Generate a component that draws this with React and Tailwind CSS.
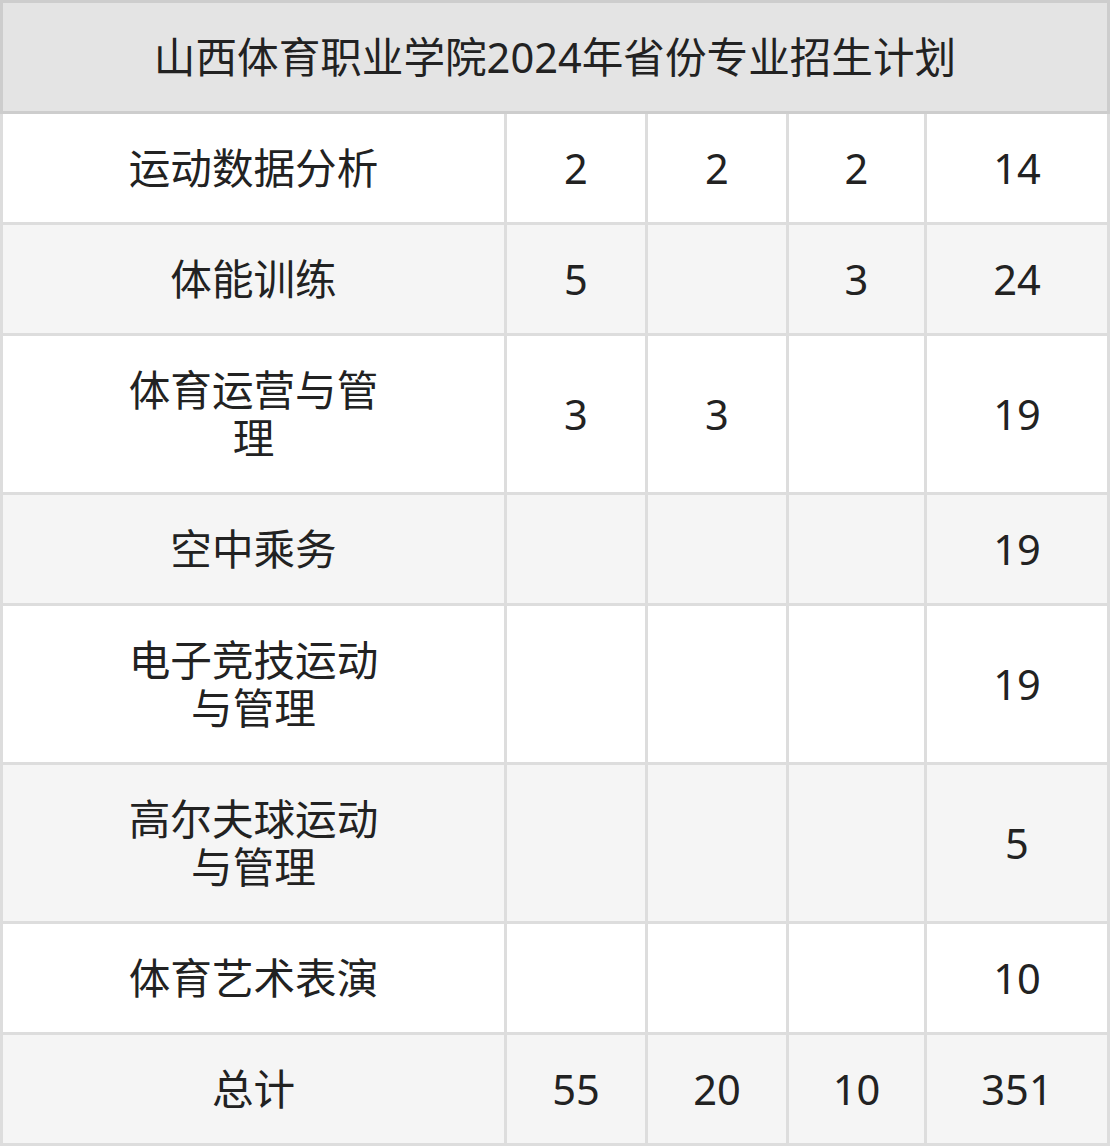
// 山西体育职业学院 2024 年省份专业招生计划表

const rows = [
  { name: '运动数据分析', a: '2', b: '2', c: '2', total: '14' },
  { name: '体能训练', a: '5', b: '', c: '3', total: '24' },
  { name: '体育运营与管理', a: '3', b: '3', c: '', total: '19' },
  { name: '空中乘务', a: '', b: '', c: '', total: '19' },
  { name: '电子竞技运动与管理', a: '', b: '', c: '', total: '19' },
  { name: '高尔夫球运动与管理', a: '', b: '', c: '', total: '5' },
  { name: '体育艺术表演', a: '', b: '', c: '', total: '10' },
  { name: '总计', a: '55', b: '20', c: '10', total: '351' },
]

const cell =
  'flex items-center justify-center text-center py-[30px] border-r-[3px] border-b-[3px] border-[#dddddd]'

export default function App() {
  return (
    <div
      className="w-[1110px] bg-white text-[#222222] text-[41.6px] leading-[48px]"
      style={{ fontFamily: '"Noto Sans", "Noto Sans CJK SC", sans-serif' }}
    >
      <div className="grid grid-cols-[507px_141px_141px_138px_183px]">
        <div className="col-span-5 flex items-center justify-center py-[30px] bg-[#e4e4e4] border-[3px] border-[#cdcdcd]">
          山西体育职业学院2024年省份专业招生计划
        </div>

        {rows.map((row, idx) => {
          const bg = idx % 2 === 0 ? 'bg-white' : 'bg-[#f5f5f5]'
          return [
            <div key={idx + '-n'} className={`${cell} ${bg} border-l-[3px]`}>
              <span className="block w-[270px]">{row.name}</span>
            </div>,
            <div key={idx + '-a'} className={`${cell} ${bg}`}>{row.a}</div>,
            <div key={idx + '-b'} className={`${cell} ${bg}`}>{row.b}</div>,
            <div key={idx + '-c'} className={`${cell} ${bg}`}>{row.c}</div>,
            <div key={idx + '-t'} className={`${cell} ${bg}`}>{row.total}</div>,
          ]
        })}
      </div>
    </div>
  )
}
